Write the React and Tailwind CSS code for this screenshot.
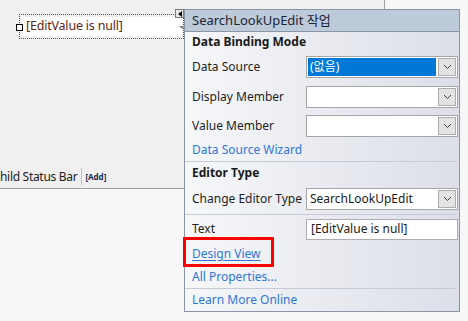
import React from "react";

const FONT = { fontFamily: "'Noto Sans', 'Noto Sans CJK KR', sans-serif" };

// small chevron used inside the combo buttons
const Chevron = () => (
  <svg width="9" height="6" viewBox="0 0 9 6" className="block">
    <path d="M1 1 L4.5 4.5 L8 1" fill="none" stroke="#404040" strokeWidth="1" />
  </svg>
);

const Combo = ({ value, selected }) => (
  <div className="w-[152px] h-[22px] border border-[#a6a6a6] bg-white p-px flex">
    <div className={`flex-1 flex items-center pl-[2px] text-[12px] leading-none ${selected ? "bg-[#0078d7] text-white" : "text-[#1a1a1a]"}`}>
      {value}
    </div>
    <div className="w-[18px] ml-[2px] bg-[#e3e3e3] border border-[#adadad] flex items-center justify-center">
      <Chevron />
    </div>
  </div>
);

const Row = ({ h, label, children }) => (
  <div className={`flex items-center pl-[7px] ${h}`}>
    <div className="w-[114px] text-[12px] text-[#1e1e1e] leading-none">{label}</div>
    {children}
  </div>
);

const Title = ({ h, children }) => (
  <div className={`flex items-center pl-[7px] font-bold text-[12px] text-[#1a1a1a] ${h}`}>{children}</div>
);

const LinkRow = ({ h, children, underline }) => (
  <div className={`flex items-center pl-[7px] text-[12px] text-[#2f76d6] ${h} ${underline ? "underline underline-offset-2" : ""}`}>
    {children}
  </div>
);

const Sep = () => <div className="h-px bg-[#c5cad6] mr-[2px]" />;

export default function App() {
  return (
    <div className="relative w-[468px] h-[321px] overflow-hidden bg-[#f7f7f7]" style={FONT}>
      {/* form design surface */}
      <div className="relative w-[385px] h-[189px] bg-[#f0f0f0] border-r border-b border-[#a0a0a0]">
        {/* selected SearchLookUpEdit */}
        <div className="absolute left-[19px] top-[14px] w-[165px] h-[25px] border border-dotted border-[#555]">
          <div className="mt-[2px] ml-[3px] mr-[1px] h-[19px] bg-white flex items-center pl-[3px] text-[12.5px] tracking-[-0.2px] text-[#5e2616] leading-none">
            [EditValue is null]
          </div>
        </div>
        <div className="absolute left-[16px] top-[24px] w-[7px] h-[7px] bg-white border border-black" />
        <div className="absolute left-[179px] top-[26px] w-0 h-0 border-l-[3px] border-r-[3px] border-t-[3px] border-l-transparent border-r-transparent border-t-[#888]" />
        {/* smart tag glyph */}
        <div className="absolute left-[175px] top-[9px] w-[9px] h-[9px] bg-[#e8e8e8] border border-[#7a7a7a] flex items-center justify-center">
          <div className="w-0 h-0 border-t-[3px] border-b-[3px] border-r-[4px] border-t-transparent border-b-transparent border-r-black" />
        </div>
        {/* status bar caption */}
        <div className="absolute left-0 top-[167px] h-[19px] flex items-center">
          <span className="text-[12px] tracking-[-0.3px] text-[#222] leading-none">hild Status Bar</span>
          <span className="ml-[4px] w-px h-[17px] bg-[#c8c0b0]" />
          <span className="ml-[3px] text-[8px] font-bold text-[#1d2b55] leading-none">[Add]</span>
        </div>
      </div>

      {/* smart tag panel */}
      <div className="absolute left-[184px] top-[9px] w-[276px] h-[303px] border border-[#8a95a7] bg-gradient-to-r from-[#f6f7f9] to-[#dcdfe8] flex flex-col">
        <div className="h-[22px] bg-[#bccada] border-b border-[#8a95a7] flex items-center pl-[7px] text-[13px] text-[#1c2533]">
          SearchLookUpEdit 작업
        </div>
        <Title h="h-[20px]">Data Binding Mode</Title>
        <Row h="h-[30px]" label="Data Source">
          <Combo value="(없음)" selected />
        </Row>
        <Row h="h-[30px]" label="Display Member">
          <Combo value="" />
        </Row>
        <Row h="h-[27px]" label="Value Member">
          <Combo value="" />
        </Row>
        <LinkRow h="h-[22px]">Data Source Wizard</LinkRow>
        <Sep />
        <Title h="h-[22px]">Editor Type</Title>
        <Row h="h-[30px]" label="Change Editor Type">
          <Combo value="SearchLookUpEdit" />
        </Row>
        <Sep />
        <Row h="h-[28px]" label="Text">
          <div className="w-[152px] h-[21px] border border-[#abadb3] bg-white flex items-center pl-[4px] text-[12px] text-[#1a1a1a] leading-none">
            [EditValue is null]
          </div>
        </Row>
        <div className="relative">
          <LinkRow h="h-[22px]" underline>Design View</LinkRow>
          <div className="absolute left-[-2px] top-[-6px] w-[91px] h-[30px] border-[3px] border-[#ff0000]" />
        </div>
        <LinkRow h="h-[23px]">All Properties...</LinkRow>
        <Sep />
        <LinkRow h="h-[22px]">Learn More Online</LinkRow>
      </div>
    </div>
  );
}
